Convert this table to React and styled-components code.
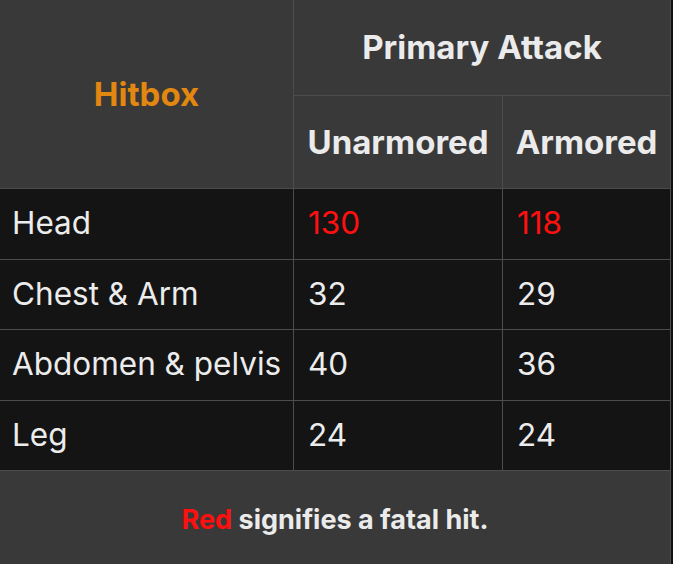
import styled, { createGlobalStyle } from 'styled-components';

const GlobalStyle = createGlobalStyle`
  html, body {
    margin: 0;
    padding: 0;
    background: #111111;
  }
  body {
    font-family: 'Inter', 'Noto Sans', sans-serif;
  }
`;

const Table = styled.table`
  border-collapse: collapse;
  table-layout: fixed;
  width: 671px;
  margin-left: -1px;
  margin-top: -1px;
  color: #e9e9e9;
  font-size: 31.5px;
  line-height: 1.1;
`;

const HeadCell = styled.th`
  background: #393939;
  border: 1px solid #4c4c4c;
  font-weight: 700;
  font-size: 33px;
  text-align: center;
  vertical-align: middle;
  height: ${(props) => props.$h}px;
  padding: 0;
  color: ${(props) => (props.$accent ? '#e2870f' : '#ebebeb')};
  white-space: nowrap;
`;

const Cell = styled.td`
  background: #141414;
  border: 1px solid #4c4c4c;
  height: 69.5px;
  padding: 0 0 0 14px;
  vertical-align: middle;
  font-weight: 400;
  color: ${(props) => (props.$fatal ? '#ff1010' : '#ececec')};
  white-space: nowrap;
`;

const RowLabel = styled(Cell)`
  padding-left: 12px;
`;

const Footer = styled.td`
  background: #393939;
  border: 1px solid #4c4c4c;
  height: 95px;
  text-align: center;
  vertical-align: middle;
  font-size: 27px;
  font-weight: 700;
  color: #ebebeb;
`;

const RedWord = styled.span`
  color: #ff1010;
`;

const rows = [
  { part: 'Head', unarmored: 130, armored: 118, fatal: true },
  { part: 'Chest & Arm', unarmored: 32, armored: 29 },
  { part: 'Abdomen & pelvis', unarmored: 40, armored: 36 },
  { part: 'Leg', unarmored: 24, armored: 24 },
];

const App = () => (
  <>
    <GlobalStyle />
    <Table>
      <colgroup>
        <col style={{ width: 294 }} />
        <col style={{ width: 209 }} />
        <col style={{ width: 168 }} />
      </colgroup>
      <thead>
        <tr>
          <HeadCell rowSpan={2} $accent $h={95}>
            Hitbox
          </HeadCell>
          <HeadCell colSpan={2} $h={95}>
            Primary Attack
          </HeadCell>
        </tr>
        <tr>
          <HeadCell $h={92}>Unarmored</HeadCell>
          <HeadCell $h={92}>Armored</HeadCell>
        </tr>
      </thead>
      <tbody>
        {rows.map((row) => (
          <tr key={row.part}>
            <RowLabel>{row.part}</RowLabel>
            <Cell $fatal={row.fatal}>{row.unarmored}</Cell>
            <Cell $fatal={row.fatal}>{row.armored}</Cell>
          </tr>
        ))}
        <tr>
          <Footer colSpan={3}>
            <RedWord>Red</RedWord> signifies a fatal hit.
          </Footer>
        </tr>
      </tbody>
    </Table>
  </>
);

export default App;
